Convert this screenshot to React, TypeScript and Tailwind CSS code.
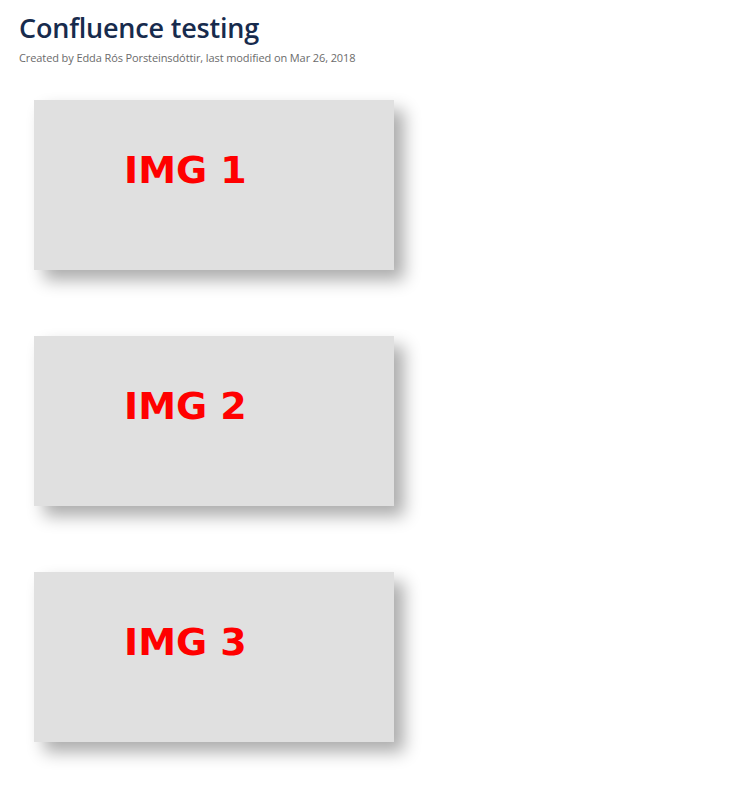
export default function App() {
  const imgs = ["IMG 1", "IMG 2", "IMG 3"];
  return (
    <div className="min-h-screen bg-white font-['Open_Sans',sans-serif]">
      <div className="px-[19px] pt-[12px]">
        <h1 className="text-[27px] leading-[32px] font-semibold text-[#172b4d] tracking-[-0.2px]">
          Confluence testing
        </h1>
        <p className="mt-[7px] text-[11px] leading-[14px] text-[#6b6b6b] tracking-[-0.1px]">
          Created by Edda Rós Porsteinsdóttir, last modified on Mar 26, 2018
        </p>
      </div>
      <div className="flex flex-col gap-[66px] pl-[34px] pt-[35px]">
        {imgs.map((label) => (
          <div
            key={label}
            className="w-[360px] h-[170px] bg-[#e0e0e0] shadow-[10px_10px_16px_rgba(0,0,0,0.33)] pl-[90px] pt-[48px]"
          >
            <span className="text-[38px] leading-[44px] font-bold text-[#ff0000] font-['DejaVu_Sans',sans-serif]">
              {label}
            </span>
          </div>
        ))}
      </div>
    </div>
  );
}
